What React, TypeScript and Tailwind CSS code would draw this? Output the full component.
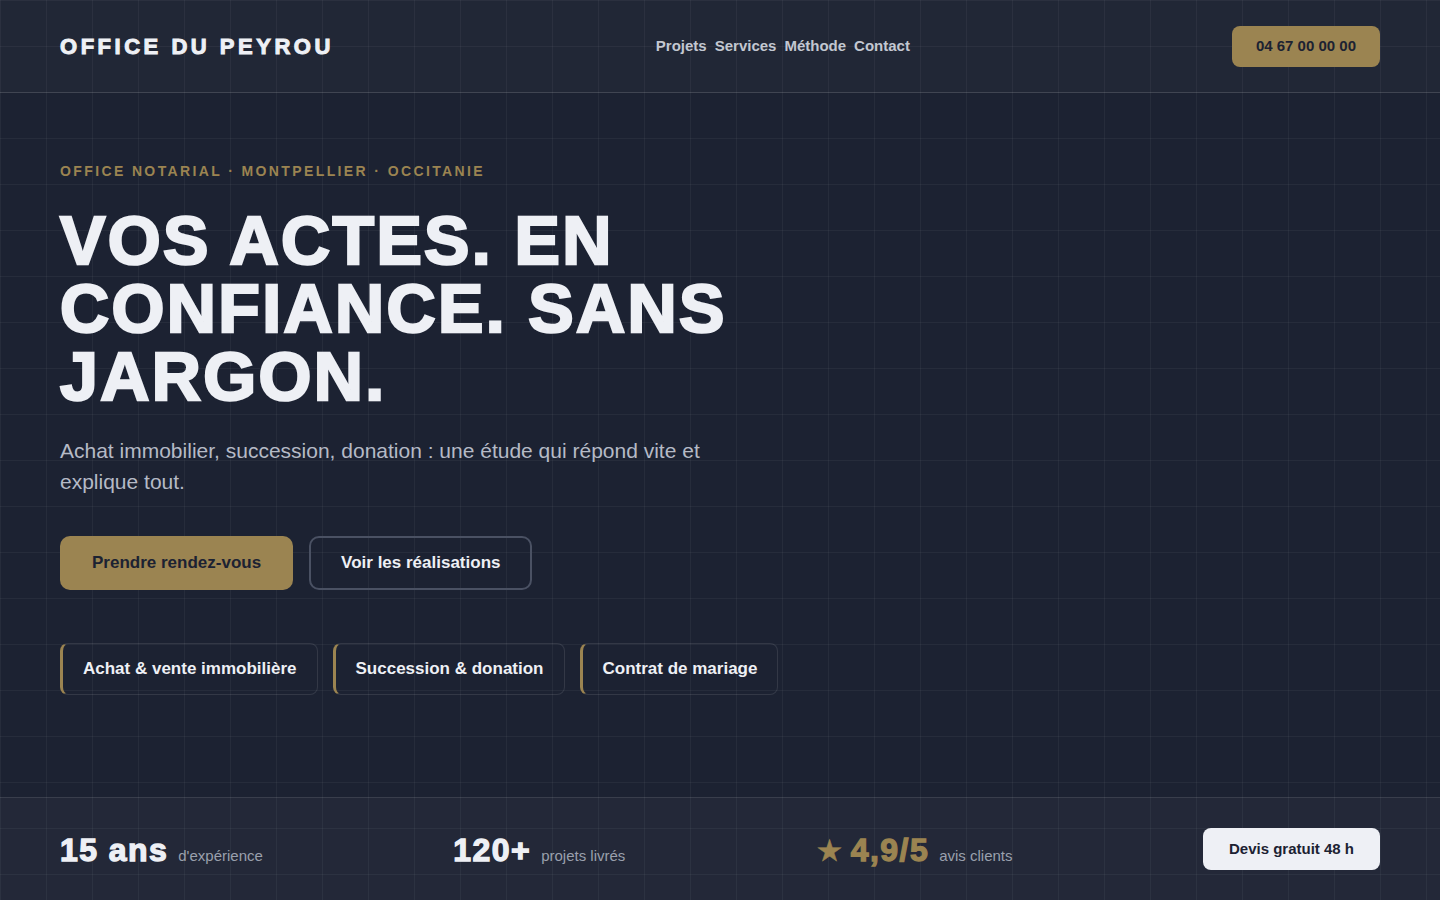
const services = ['Achat & vente immobilière', 'Succession & donation', 'Contrat de mariage'];

const stats = [
  { value: '15 ans', label: "d'expérience", star: false },
  { value: '120+', label: 'projets livrés', star: false },
  { value: '4,9/5', label: 'avis clients', star: true },
];

export default function App() {
  return (
    <div className="min-h-screen flex flex-col bg-[#1c2232] bg-[linear-gradient(to_right,rgba(255,255,255,0.045)_1px,transparent_1px),linear-gradient(to_bottom,rgba(255,255,255,0.045)_1px,transparent_1px)] bg-[size:46px_46px] font-['Liberation_Sans',Arial,sans-serif] text-[#eef0f5]">
      {/* header */}
      <header className="h-[93px] flex items-center justify-between px-[60px] bg-white/[0.025] border-b border-white/10">
        <div className="text-[22px] font-bold tracking-[0.16em] [-webkit-text-stroke-width:1px]">OFFICE DU PEYROU</div>
        <nav className="flex items-center gap-2 text-[15px] font-bold text-[#c3c7d1]">
          <a>Projets</a>
          <a>Services</a>
          <a>Méthode</a>
          <a>Contact</a>
        </nav>
        <button className="h-[41px] px-6 rounded-lg bg-[#9b8451] text-[15px] font-bold text-[#1c2232]">
          04 67 00 00 00
        </button>
      </header>

      {/* hero */}
      <main className="flex-1 px-[60px] pt-[68px]">
        <p className="text-[14px] leading-5 font-bold tracking-[0.17em] text-[#9b8451]">
          OFFICE NOTARIAL · MONTPELLIER · OCCITANIE
        </p>
        <h1 className="mt-[25px] max-w-[900px] text-[68px] leading-[68px] font-bold tracking-[0.035em] [-webkit-text-stroke-width:2.5px]">
          VOS ACTES. EN CONFIANCE. SANS JARGON.
        </h1>
        <p className="mt-[25px] max-w-[700px] text-[21px] leading-[31px] text-[#b5bac6]">
          Achat immobilier, succession, donation : une étude qui répond vite et explique tout.
        </p>
        <div className="mt-[39px] flex gap-4">
          <button className="h-[54px] px-8 rounded-[10px] bg-[#9b8451] text-[17px] font-bold text-[#1c2232]">
            Prendre rendez-vous
          </button>
          <button className="h-[54px] px-[30px] rounded-[10px] border-2 border-[#4a5163] text-[17px] font-bold text-[#eef0f5]">
            Voir les réalisations
          </button>
        </div>
        <div className="mt-[53px] flex gap-[15px]">
          {services.map((s) => (
            <div
              key={s}
              className="h-[52px] flex items-center px-5 rounded-lg border border-white/10 border-l-[3px] border-l-[#9b8451] text-[17px] font-bold"
            >
              {s}
            </div>
          ))}
        </div>
      </main>

      {/* stats bar */}
      <footer className="h-[103px] flex items-center justify-between px-[60px] bg-white/[0.03] border-t border-white/10">
        {stats.map((st) => (
          <div key={st.label} className="mt-1 flex items-baseline">
            {st.star && (
              <span className="mr-[8px] text-[30px] leading-none text-[#9b8451] [-webkit-text-stroke-width:0.5px]">★</span>
            )}
            <span
              className={`text-[32px] leading-none font-bold tracking-[0.045em] [-webkit-text-stroke-width:1.3px] ${
                st.star ? 'text-[#9b8451]' : 'text-[#eef0f5]'
              }`}
            >
              {st.value}
            </span>
            <span className="ml-[10px] text-[15px] text-[#9aa0ad]">{st.label}</span>
          </div>
        ))}
        <button className="h-[42px] px-[26px] rounded-lg bg-[#eef0f5] text-[15px] font-bold text-[#1c2232]">
          Devis gratuit 48 h
        </button>
      </footer>
    </div>
  );
}
